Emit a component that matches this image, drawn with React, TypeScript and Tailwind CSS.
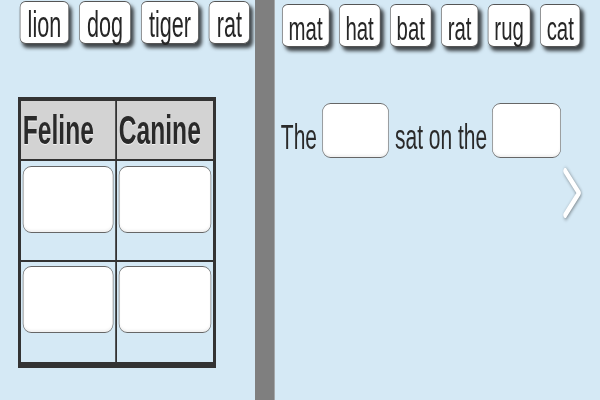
const leftWords = ["lion", "dog", "tiger", "rat"];
const rightWords = ["mat", "hat", "bat", "rat", "rug", "cat"];

function WordTile({ word, tight = false }: { word: string; tight?: boolean }) {
  return (
    <div
      className={`flex h-[43px] items-center rounded-[10px/6px] border border-[#555] bg-white pt-[4px] leading-none text-[#262626] shadow-[5px_4px_5px_rgba(0,0,0,0.7)] ${
        tight ? "px-[10px] text-[34px]" : "px-3 text-[36px]"
      }`}
    >
      {word}
    </div>
  );
}

function DropBox({ className = "" }: { className?: string }) {
  return (
    <div
      className={`rounded-[14px/9px] border border-[#666] bg-white shadow-[inset_0_-2px_3px_rgba(0,0,0,0.06)] ${className}`}
    />
  );
}

// The reference is drawn on a 1000px canvas squeezed to 600px wide.
export default function App() {
  return (
    <div className="h-[400px] w-[600px] overflow-hidden">
      <div
        className="flex h-[400px] w-[1000px] origin-top-left scale-x-[0.6] text-[#2a2a2a]"
        style={{ fontFamily: '"Liberation Sans", Arial, sans-serif' }}
      >
        {/* left: sort animals */}
        <div className="flex w-[425px] shrink-0 flex-col bg-[#d5e9f5]">
          <div className="flex gap-[17px] pl-[33px] pt-[1px]">
            {leftWords.map((w) => (
              <WordTile key={w} word={w} />
            ))}
          </div>
          <div className="ml-[30px] mt-[53px] w-[330px] border-x-[5px] border-b-[6px] border-t-4 border-[#333]">
            <div className="grid grid-cols-2">
              <div className="h-[60px] border-b-2 border-r-[3px] border-[#333] bg-[#d3d3d3] pl-[3px] pt-[9px] text-[41px] font-bold leading-none [text-shadow:0_1px_1px_rgba(255,255,255,0.8)]">
                Feline
              </div>
              <div className="h-[60px] border-b-2 border-[#333] bg-[#d3d3d3] pl-[3px] pt-[9px] text-[41px] font-bold leading-none [text-shadow:0_1px_1px_rgba(255,255,255,0.8)]">
                Canine
              </div>
              <div className="h-[101px] border-b-2 border-r-[3px] border-[#333] px-[3px] pt-[5px]">
                <DropBox className="h-[67px]" />
              </div>
              <div className="h-[101px] border-b-2 border-[#333] px-[3px] pt-[5px]">
                <DropBox className="h-[67px]" />
              </div>
              <div className="h-[100px] border-r-[3px] border-[#333] px-[3px] pt-[4px]">
                <DropBox className="h-[67px]" />
              </div>
              <div className="h-[100px] px-[3px] pt-[4px]">
                <DropBox className="h-[67px]" />
              </div>
            </div>
          </div>
        </div>

        <div className="w-[33px] shrink-0 bg-[#7f7f7f]" />

        {/* right: fill the sentence */}
        <div className="flex min-w-0 flex-1 flex-col bg-[#d5e9f5]">
          <div className="flex gap-[16px] pl-[12px] pt-[4px]">
            {rightWords.map((w, i) => (
              <WordTile key={w + i} word={w} tight />
            ))}
          </div>
          <div className="mt-[56px] flex items-end pl-[10px] text-[35px] leading-none">
            <span className="mb-[4px]">The</span>
            <DropBox className="ml-[9px] mr-[10px] h-[55px] w-[111px]" />
            <span className="mb-[4px]">sat on the</span>
            <DropBox className="ml-[8px] h-[55px] w-[115px]" />
          </div>
          <div className="flex justify-end pr-[30px] pt-[10px]">
            <svg
              width="34"
              height="50"
              viewBox="0 0 34 50"
              className="drop-shadow-[1px_1px_2px_rgba(0,0,0,0.45)]"
            >
              <polyline
                points="6,3 29,25 6,47"
                fill="none"
                stroke="#fff"
                strokeWidth="6"
                strokeLinecap="round"
                strokeLinejoin="round"
              />
            </svg>
          </div>
        </div>
      </div>
    </div>
  );
}
